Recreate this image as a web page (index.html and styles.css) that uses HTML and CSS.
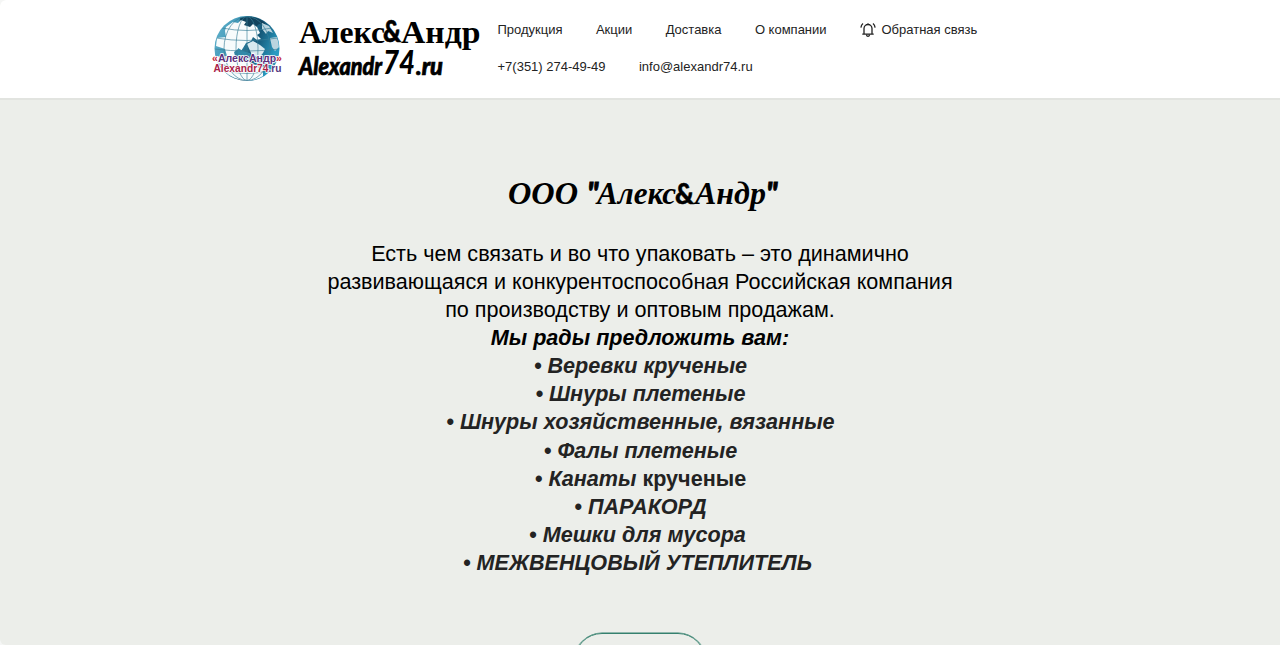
FILE: index.html
```html
<!DOCTYPE html>
<html lang="ru">
<head>
<meta charset="utf-8">
<title>Алекс&amp;Андр</title>
<link rel="stylesheet" href="styles.css">
</head>
<body>
<div class="page">
<header class="header">
  <svg class="globe" width="76" height="72" viewBox="0 0 76 72" role="img" aria-label="АлексАндр">
    <defs>
      <linearGradient id="sea" x1="0" y1="0" x2="1" y2=".4">
        <stop offset="0" stop-color="#67b5cf"/><stop offset=".4" stop-color="#3d96b6"/><stop offset=".7" stop-color="#155878"/><stop offset="1" stop-color="#2a9cc2"/>
      </linearGradient>
      <clipPath id="ball"><circle cx="38" cy="35.500" r="32"/></clipPath>
    </defs>
    <circle cx="38" cy="35.500" r="32.500" fill="url(#sea)"/>
    <g clip-path="url(#ball)">
      <path fill="#12445e" d="M31 5l12-3 9 3 5 7-7-1-5 5-7-3-8 1z"/>
      <path fill="#f7fbfc" d="M17 14l7-5 5 1 3-3 5 2-2 3 6 2 3-3 4 3 3 6-3 2 4 4-4 1-4-3-2 4-5 2-3 5-2 3-3-2-4 3 1 4 5 2 6 1 5 5 12 2v20H5V44l13-1-2-7-9-3 1-8 9-1-1-6z"/>
      <path fill="#d8e9ef" d="M38 31l6-3 7 4 5 4-2 4-4 5-7-3z"/>
      <path fill="#bad5df" d="M53 10l7 3 4 7-5-2-2 3-4-5zM61 25l7-1 3 9-5 5-3-4z"/>
      <path fill="#3289a9" d="M29 35l5 3 7 2 1 7H28z"/>
      <g fill="none" stroke="#397f98" stroke-width=".65"><ellipse cx="38" cy="35.500" rx="11" ry="32"/><ellipse cx="38" cy="35.500" rx="23" ry="32"/><path d="M38 3v65M7 25q30 5 62 0M5 36q33 4 66 0M10 51q28 8 56 0M14 57q24 7 48 0M13 15q25 5 50 0"/></g>
    </g>
    <g class="globe-text">
      <text x="3" y="49" textLength="70" lengthAdjust="spacingAndGlyphs"><tspan fill="#c2253b">«</tspan><tspan fill="#5c2f7d">АлексАндр</tspan><tspan fill="#c2253b">»</tspan></text>
      <text x="4.500" y="58.500" textLength="68" lengthAdjust="spacingAndGlyphs" fill="#a92349">Alexandr74<tspan fill="#553880">.ru</tspan></text>
    </g>
  </svg>
  <svg class="wordmark" width="190" height="72" viewBox="0 0 190 72">
    <text class="wordmark-serif" x="4" y="29.500" textLength="86" lengthAdjust="spacingAndGlyphs">Алекс</text>
    <text class="wordmark-amp" x="88" y="29" textLength="18" lengthAdjust="spacingAndGlyphs">&amp;</text>
    <text class="wordmark-serif" x="106" y="29.500" textLength="79.500" lengthAdjust="spacingAndGlyphs">Андр</text>
    <text class="wordmark-script" x="4" y="61.500" textLength="83" lengthAdjust="spacingAndGlyphs">Alexandr</text>
    <text class="wordmark-digits" x="88" y="61" textLength="32" lengthAdjust="spacingAndGlyphs">74</text>
    <text class="wordmark-script" x="121" y="61.500" textLength="27" lengthAdjust="spacingAndGlyphs">.ru</text>
  </svg>
  <nav class="nav">
    <div class="nav-row">
      <a>Продукция</a><a>Акции</a><a>Доставка</a><a>О компании</a>
      <a class="callback"><svg width="16" height="16" viewBox="0 0 16 16" fill="none" stroke="#232323" stroke-width="1.300"><path d="M2.300 12.200h11.400M4 12.200V6.500a4 4 0 0 1 8 0v5.700M6.500 12.800c.3 2 2.700 2 3 0M8 2.500V1.200M3 1.400Q1.200 2.900.9 5.600M13 1.400Q14.800 2.900 15.100 5.600"/></svg>Обратная связь</a>
    </div>
    <div class="nav-row"><a>+7(351) 274-49-49</a><a>info@alexandr74.ru</a></div>
  </nav>
</header>
<main class="hero">
  <h1 class="title">
    <svg width="280" height="50" viewBox="0 0 280 50">
      <text x="8" y="34" textLength="70" lengthAdjust="spacingAndGlyphs">ООО</text>
      <text class="title-sans" x="87" y="34">"</text>
      <text x="97" y="34" textLength="79" lengthAdjust="spacingAndGlyphs">Алекс</text>
      <text class="title-amp" x="175" y="33.500" textLength="19" lengthAdjust="spacingAndGlyphs">&amp;</text>
      <text x="195" y="34" textLength="71" lengthAdjust="spacingAndGlyphs">Андр</text>
      <text class="title-sans" x="266" y="34">"</text>
    </svg>
  </h1>
  <div class="copy">
    <p>Есть чем связать и во что упаковать – это динамично<br>развивающаяся и конкурентоспособная Российская компания<br>по производству и оптовым продажам.</p>
    <p class="lead">Мы рады предложить вам:</p>
    <ul class="goods">
      <li>• Веревки крученые</li>
      <li>• Шнуры плетеные</li>
      <li>• Шнуры хозяйственные, вязанные</li>
      <li>• Фалы плетеные</li>
      <li>• Канаты <span class="upright">крученые</span></li>
      <li>• ПАРАКОРД</li>
      <li class="trailing">• Мешки для мусора</li>
      <li class="trailing">• МЕЖВЕНЦОВЫЙ УТЕПЛИТЕЛЬ</li>
    </ul>
  </div>
  <a class="more"></a>
</main>
</div>
</body>
</html>
```
FILE: styles.css
```css
* { box-sizing: border-box; }
body { margin: 0; background: #f5f6f5; font-family: "Liberation Sans", Arial, sans-serif; }
.page { height: 645px; overflow: hidden; border-radius: 6px 0 0 6px; background: #eceeea; }
.header { display: flex; height: 100px; padding: 13px 0 0 209px; background: #fff; border-bottom: 2px solid #e2e4e0; }
.globe, .wordmark { flex: none; display: block; }
.globe-text { font: bold 10.5px "Liberation Sans", Arial, sans-serif; paint-order: stroke; stroke: #fff; stroke-width: 1.5px; }
.wordmark { margin-left: 10px; }
.wordmark-serif { font: bold 32px "Liberation Serif", serif; }
.wordmark-amp { font: 900 30px Lato, sans-serif; stroke: #000; stroke-width: .6px; }
.wordmark-script { font: italic 900 24px Lato, sans-serif; stroke: #000; stroke-width: .7px; }
.wordmark-digits { font: italic 900 32px Lato, sans-serif; }
.nav { margin-left: 12.5px; padding-top: 8px; }
.nav-row { display: flex; gap: 33.4px; height: 36.5px; font-size: 13px; line-height: 18px; color: #232323; white-space: nowrap; }
.callback { display: flex; }
.callback svg { margin: 1px 5.5px 0 0; }
.hero { display: flex; flex-direction: column; align-items: center; padding-top: 70px; }
.title { height: 50px; margin: 0; }
.title svg { display: block; font: italic bold 32px "Liberation Serif", serif; }
.title-sans { font: italic 900 30px Lato, sans-serif; stroke: #000; stroke-width: .8px; }
.title-amp { font: 900 29px Lato, sans-serif; stroke: #000; stroke-width: .5px; }
.copy { margin-top: 20px; font-size: 21.6px; line-height: 28.08px; text-align: center; white-space: nowrap; color: #000; }
.copy p { margin: 0; }
.lead { font-weight: bold; font-style: italic; }
.goods { margin: 0 0 0 1px; padding: 0; list-style: none; color: #232323; font-weight: bold; font-style: italic; }
.upright { font-style: normal; }
.trailing { padding-right: 6px; }
.more { width: 132px; height: 56px; margin-top: 56px; border: 1.8px solid #35806e; box-shadow: 0 0 0 .4px #35806e; border-radius: 28px; flex: none; }
```
